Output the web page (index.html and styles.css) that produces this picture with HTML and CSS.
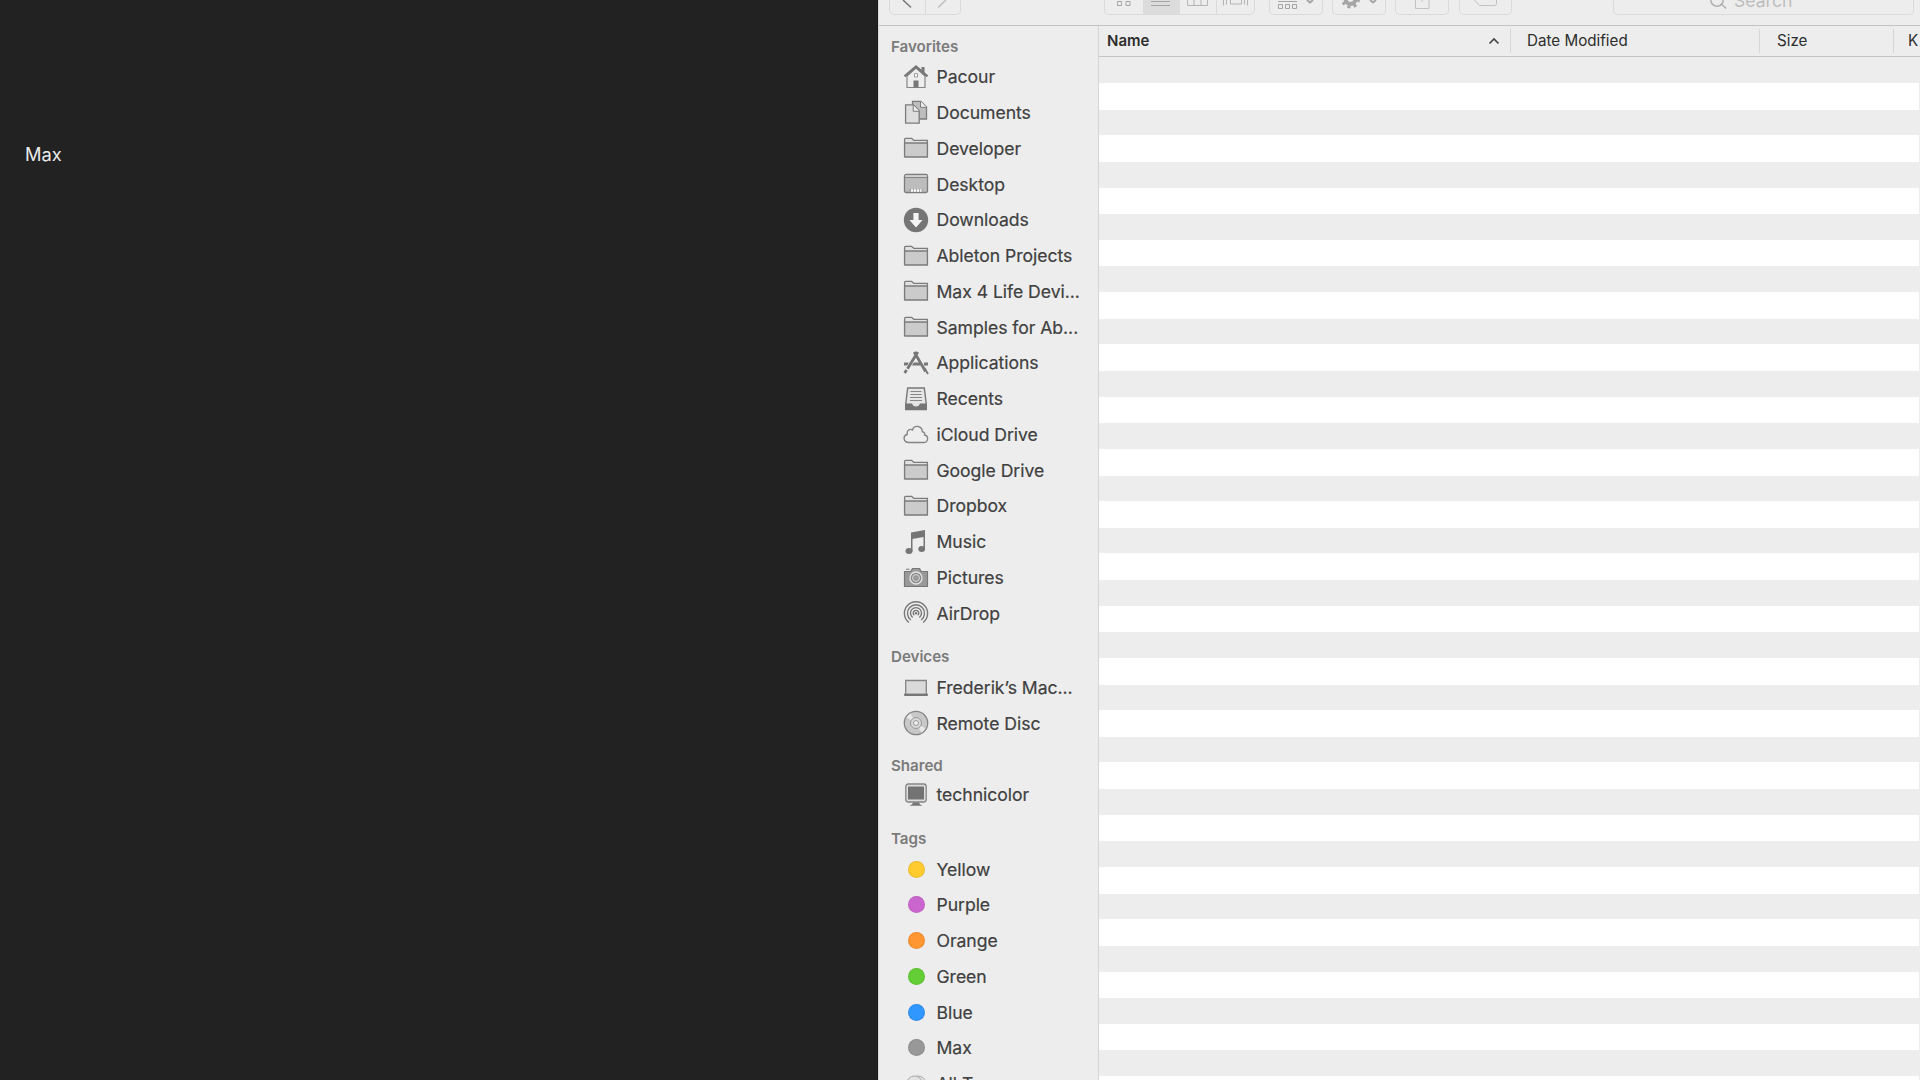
FILE: index.html
```html
<!DOCTYPE html>
<html lang="en">
<head>
<meta charset="utf-8">
<title>Finder</title>
<link rel="stylesheet" href="styles.css">
</head>
<body>
<svg width="0" height="0" class="defs">
  <symbol id="folder" viewBox="0 0 26 26"><path d="M1.600 22V4.300q0-1 1-1h6l2.200 2h13.600v16.600H1.600z" fill="#e2e2e2" stroke="#7c7c7c" stroke-width="1.300"/><path d="M1.600 8h22.800v13.900H1.600z" fill="#cbcbcb" stroke="#7c7c7c" stroke-width="1.300"/></symbol>
</svg>
<main class="screen">
  <section class="desktop"><span class="label">Max</span></section>
  <section class="window">
    <header class="toolbar">
      <div class="group nav">
        <svg width="35" height="14"><path d="M13 0l8 7.500" stroke="#777" stroke-width="1.500" fill="none"/></svg>
        <svg width="35" height="14"><path d="M20 0l-8 7.500" stroke="#bbb" stroke-width="1.300" fill="none"/></svg>
      </div>
      <div class="group views">
        <svg width="38" height="14" fill="none" stroke="#a5a5a5"><path d="M12.500 1.500h4v4h-4zM21 1.500h4v4h-4z"/></svg>
        <svg class="on" width="37" height="14" stroke="#a5a5a5"><path d="M8 1.500h19M8 5.500h19"/></svg>
        <svg width="36" height="14" fill="none" stroke="#b4b4b4"><path d="M7.500-2V5.500h20V-2M14-2v7.500M21-2v7.500"/></svg>
        <svg width="38" height="14" fill="none" stroke="#b4b4b4"><path d="M6.500-2v7.500M9.500-2v6.500M13.500-2v6h11v-6M27.500-2v6.500M30.500-2v7.500"/></svg>
      </div>
      <div class="group arrange"><svg width="52" height="14" fill="none" stroke="#a5a5a5"><path d="M8 1.500h19M8.500 4.500h4v4h-4zM15.500 4.500h4v4h-4zM22.500 4.500h4v4h-4z"/><path d="M37 0l3 2.500 3-2.500" stroke-width="2"/></svg></div>
      <div class="group gear"><svg width="52" height="14" fill="none" stroke="#a5a5a5"><circle cx="17.500" cy="-1" r="5" stroke-width="4"/><circle cx="17.500" cy="-1" r="8" stroke-width="3" stroke-dasharray="3 3.280"/><path d="M37 0l3 2.500 3-2.500" stroke-width="2"/></svg></div>
      <div class="group share"><svg width="52" height="14" fill="none" stroke="#c2c2c2"><path d="M19.500-2V8.500h13.500V-2M26-2v4"/></svg></div>
      <div class="group tag"><svg width="52" height="14" fill="none" stroke="#c2c2c2"><path d="M14.500 0l5 5.500h15q2 0 2-2V-1"/></svg></div>
      <div class="group search"><svg width="20" height="14" fill="none" stroke="#b0b0b0" stroke-width="1.500"><circle cx="8" cy="0" r="6.200"/><path d="M12.200 4l5 4.500"/></svg><span>Search</span></div>
    </header>
    <div class="body">
      <nav class="sidebar">
        <h2 class="first">Favorites</h2>
        <ul>
          <li><svg viewBox="0 0 26 26"><path d="M4 12v11.500h18V12l-9-8z" fill="#eee" stroke="#858585" stroke-width="1.200"/><path d="M1.500 12.300L13 2.500l11.500 9.800" fill="none" stroke="#777" stroke-width="2.400"/><path d="M18.500 3h3v6l-3-2.500z" fill="#777"/><path d="M11.500 9.500h3v3.500h-3z" fill="#fff" stroke="#888" stroke-width=".8"/><path d="M10.500 16.500h5v7h-5z" fill="#777"/></svg>Pacour</li>
          <li><svg viewBox="0 0 26 26"><path d="M9.500 1.300h8.300l5.700 5.700v12h-14z" fill="#bdbdbd" stroke="#7c7c7c" stroke-width="1.300"/><path d="M17.500 1.300v6h6" fill="#eee" stroke="#7c7c7c"/><path d="M2.600 4.800h7.800l5.800 6v12.400H2.600z" fill="#dedede" stroke="#7c7c7c" stroke-width="1.300"/><path d="M10.200 5v6.300h6" fill="#eee" stroke="#7c7c7c"/></svg>Documents</li>
          <li><svg><use href="#folder"/></svg>Developer</li>
          <li><svg viewBox="0 0 26 26"><rect x="1.500" y="3.500" width="23" height="18" rx="1.500" fill="#bcbcbc" stroke="#7c7c7c" stroke-width="1.300"/><path d="M2 5h22" stroke="#e0e0e0" stroke-width="1.200"/><path d="M2 6.500h22" stroke="#858585"/><path d="M6.500 18h13v2.500h-13z" fill="#999"/><path d="M8 19.500h10.500" stroke="#fff" stroke-width="2.500" stroke-dasharray="2.200 .8"/></svg>Desktop</li>
          <li><svg viewBox="0 0 26 26"><circle cx="13" cy="13" r="12.200" fill="#757575"/><path d="M10.400 6h5.200v7h4L13 20.500 6.400 13h4z" fill="#f4f4f4"/></svg>Downloads</li>
          <li><svg><use href="#folder"/></svg>Ableton Projects</li>
          <li><svg><use href="#folder"/></svg>Max 4 Life Devi...</li>
          <li><svg><use href="#folder"/></svg>Samples for Ab...</li>
          <li><svg viewBox="0 0 26 26" fill="none" stroke="#777"><path d="M1 14h4.500M8 14h9.500M21 14h4" stroke-width="3.200"/><path d="M14.800 2.500L4.500 18.800" stroke="#eee" stroke-width="4"/><path d="M14.800 2L4.500 18.800M3.600 20l-2 3M11.200 2l11.400 19.500" stroke-width="2.800"/><path d="M21.500 18l3.500 6" stroke-width="1.800"/></svg>Applications</li>
          <li><svg viewBox="0 0 26 26"><path d="M4.700 2h16.600l2 16v5.500H2.700V18z" fill="#e5e5e5" stroke="#777" stroke-width="1.400"/><path d="M7.500 5.500h11M7.500 8.500h11M7 11.500h12M7 14.500h12" stroke="#888" stroke-width="1.200"/><path d="M2.500 17.500h6.500q1 3 4 3t4-3h6.500v5q0 1.500-1.500 1.500H4q-1.500 0-1.500-1.500z" fill="#757575"/></svg>Recents</li>
          <li><svg viewBox="0 0 26 26"><path d="M6 21.500c-6 0-6.300-7-1.800-8C3.500 9 7 7.500 9.500 9c1.500-5.500 9.800-4.500 9.800 1.800 2.200.1 2.700 1.700 2.200 3.200 4.500.6 4 7.500-1 7.500z" fill="#eee" stroke="#858585" stroke-width="1.400"/></svg>iCloud Drive</li>
          <li><svg><use href="#folder"/></svg>Google Drive</li>
          <li><svg><use href="#folder"/></svg>Dropbox</li>
          <li><svg viewBox="0 0 26 26" fill="#757575"><path d="M8 3.500L22 1v19h-1.500V8L9.500 10v12.500H8z"/><ellipse cx="6" cy="22" rx="3.500" ry="2.900"/><ellipse cx="18.700" cy="20" rx="3.400" ry="2.900"/></svg>Music</li>
          <li><svg viewBox="0 0 26 26"><path d="M1.500 7.500h6.200l1.800-3h7l1.800 3h6.200v15h-23z" fill="#999" stroke="#777" stroke-width="1.200"/><path d="M3 5.300h3.500" stroke="#888" stroke-width="1.200"/><circle cx="13" cy="14" r="6" fill="#888" stroke="#e5e5e5" stroke-width="1.300"/><circle cx="13" cy="14" r="3.500" fill="#999" stroke="#d8d8d8"/></svg>Pictures</li>
          <li><svg viewBox="0 0 26 26" fill="none" stroke="#777" stroke-width="1.400"><path d="M5.800 22.500A11.600 11.600 0 1 1 20.200 22.500M7.800 20A8.500 8.500 0 1 1 18.200 20M9.700 17.500A5.500 5.500 0 1 1 16.300 17.500"/><path d="M11.200 15.300A2.800 2.800 0 1 1 14.800 15.300"/><circle cx="13" cy="13.300" r=".6" fill="#777"/></svg>AirDrop</li>
        </ul>
        <h2 class="devices">Devices</h2>
        <ul>
          <li><svg viewBox="0 0 26 26"><path d="M2.700 5.500h20.600v14H2.700z" fill="#dadada" stroke="#858585" stroke-width="1.300"/><path d="M1 18.800h24v1.200q0 1-1 1H2q-1 0-1-1z" fill="#777"/></svg>Frederik’s Mac...</li>
          <li><svg viewBox="0 0 26 26"><circle cx="13" cy="13" r="11.700" fill="#c8c8c8" stroke="#858585" stroke-width="1.300"/><path d="M13 13L3.500 7.500A11 11 0 0 1 7.500 3.500zM13 13l9.500 5.500a11 11 0 0 1-4 4z" fill="#e8e8e8"/><circle cx="13" cy="13" r="5.500" fill="#d8d8d8" stroke="#999"/><circle cx="13" cy="13" r="2.500" fill="#eee" stroke="#999"/></svg>Remote Disc</li>
        </ul>
        <h2 class="shared">Shared</h2>
        <ul>
          <li><svg viewBox="0 0 26 26"><rect x="2.800" y="2" width="20.400" height="18" rx="2.500" fill="#ddd" stroke="#858585" stroke-width="1.300"/><path d="M5 4.500h16v13H5z" fill="#737373"/><path d="M9.500 20.500h7v1.500l3 1.800H6.500l3-1.800z" fill="#777"/></svg>technicolor</li>
        </ul>
        <h2 class="tags">Tags</h2>
        <ul>
          <li><i class="dot yellow"></i>Yellow</li>
          <li><i class="dot purple"></i>Purple</li>
          <li><i class="dot orange"></i>Orange</li>
          <li><i class="dot green"></i>Green</li>
          <li><i class="dot blue"></i>Blue</li>
          <li><i class="dot gray"></i>Max</li>
          <li><svg viewBox="0 0 26 26" fill="#e2e2e2" stroke="#aaa"><circle cx="15" cy="13" r="8"/><circle cx="11.500" cy="13" r="8"/></svg>All Tags...</li>
        </ul>
      </nav>
      <div class="list">
        <div class="columns">
          <div class="col name">Name<svg width="12" height="8"><path d="M1.500 6.500L6 2l4.500 4.500" fill="none" stroke="#444" stroke-width="1.600"/></svg></div>
          <div class="col date">Date Modified</div>
          <div class="col size">Size</div>
          <div class="col kind">Kind</div>
        </div>
        <div class="rows"></div>
      </div>
    </div>
  </section>
</main>
</body>
</html>
```
FILE: styles.css
```css
* { box-sizing: border-box; }
body { margin: 0; font-family: Inter, "Liberation Sans", sans-serif; }
.defs { position: absolute; }
.screen { display: flex; width: 1920px; height: 1080px; overflow: hidden; background: #222; }
.desktop { width: 878px; padding: 143px 0 0 25px; flex: none; border-right: 1px solid #1a1a1a; }
.label { display: block; font-size: 18.3px; line-height: 22px; color: #eaeaea; }
.window { flex: 1; min-width: 0; background: #ededed; border-left: 1px solid #dcdcdc; }
.toolbar { display: flex; height: 26px; border-bottom: 1px solid #c4c4c4; overflow: hidden; padding-left: 10px; }
.group { display: flex; height: 15px; border: 1px solid #dadada; border-top: 0; border-radius: 0 0 5px 5px; flex: none; overflow: hidden; }
.group svg { flex: none; }
.nav { width: 72px; }
.nav svg + svg, .views svg:last-child { border-left: 1px solid #dadada; }
.views { width: 151px; margin-left: 143px; }
.on { background: #dcdcdc; }
.arrange { width: 54px; margin-left: 14px; }
.gear { width: 54px; margin-left: 9px; }
.share { width: 54px; margin-left: 9px; }
.tag { width: 53px; margin-left: 10px; }
.search { width: 301px; margin-left: 101px; padding-left: 95px; font-size: 17.6px; line-height: 20px; color: #bdbdbd; }
.search span { margin: -9px 0 0 5px; }
.body { display: flex; height: 1054px; }
.sidebar { width: 220px; flex: none; border-right: 1px solid #d6d6d6; overflow: hidden; }
h2 { margin: 0; padding-left: 12px; font-size: 15.2px; font-weight: 600; line-height: 20px; letter-spacing: -.05px; color: #7b7b7b; }
.first { height: 32.9px; padding-top: 11px; }
.devices { height: 38.8px; padding-top: 16.6px; }
.shared { height: 35.9px; padding-top: 15px; }
.tags { height: 38.3px; padding-top: 16px; }
ul { list-style: none; margin: 0; padding: 0; }
li { display: flex; align-items: center; height: 35.75px; padding-left: 24px; font-size: 17.6px; letter-spacing: -.04px; color: #404040; white-space: nowrap; -webkit-text-stroke: .2px #404040; }
li svg { width: 26px; height: 26px; margin-right: 7.5px; flex: none; }
.dot { width: 17px; height: 17px; margin: 0 12px 0 4.5px; border-radius: 50%; flex: none; border: 1px solid rgba(0, 0, 0, .08); }
.yellow { background: #ffcb2f; }
.purple { background: #cc66cf; }
.orange { background: #ff9632; }
.green { background: #63ce35; }
.blue { background: #3097ff; }
.gray { background: #989898; }
.list { flex: 1; min-width: 0; }
.columns { display: flex; height: 31px; align-items: center; border-bottom: 1px solid #c6c6c6; overflow: hidden; }
.col { height: 24px; flex: none; font-size: 15.2px; line-height: 23px; color: #2e2e2e; border-right: 1px solid #d6d6d6; white-space: nowrap; }
.name { width: 412px; display: flex; align-items: center; justify-content: space-between; padding: 0 10px 1px 8px; font-size: 15px; font-weight: 600; }
.date { width: 249px; padding-left: 16px; }
.size { width: 134px; padding-left: 17px; }
.kind { border: 0; padding-left: 14px; letter-spacing: 1px; }
.rows {
  height: 1023px;
  margin-right: 1px;
  background:
    linear-gradient(#ededed, #ededed) top / 100% 2px no-repeat,
    repeating-linear-gradient(#ededed .44px 26.1px, #fff 26.1px 52.7px);
}
```
